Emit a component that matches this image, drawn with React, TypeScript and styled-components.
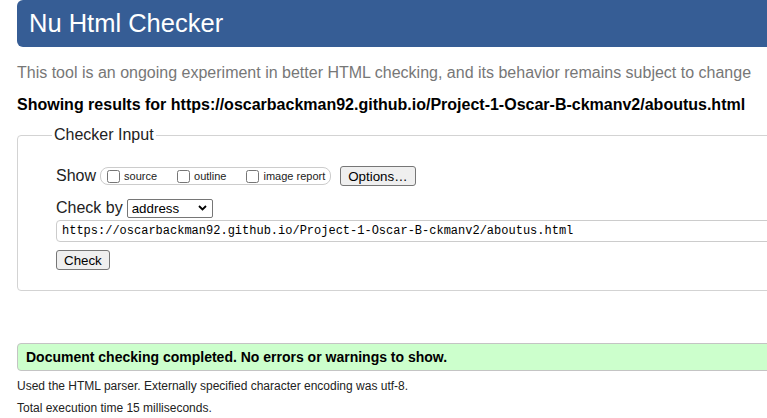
import React from "react";
import styled, { createGlobalStyle } from "styled-components";

const Global = createGlobalStyle`
  html, body { margin: 0; padding: 0; overflow: hidden; background: #fff; }
  body { font-family: "Liberation Sans", Arial, sans-serif; color: #000; }
`;

const Page = styled.div`
  width: 1100px;
  padding-left: 17px;
  box-sizing: border-box;
`;

const Header = styled.header`
  height: 47px;
  background: #365d95;
  border-radius: 6px;
  padding-left: 12px;
`;

const Title = styled.h1`
  margin: 0;
  font-weight: normal;
  font-size: 25.5px;
  line-height: 47px;
  color: #fff;
`;

const Intro = styled.p`
  margin: 17px 0 0;
  font-size: 16px;
  line-height: 18px;
  color: #777;
`;

const ResultsFor = styled.p`
  margin: 14px 0 0;
  font-size: 16px;
  line-height: 18px;
  font-weight: bold;
`;

const Fieldset = styled.fieldset`
  margin: 12px 0 0;
  padding: 4px 0 20px 38px;
  border: 1px solid #d3d3d3;
  border-radius: 4px;
  min-width: 0;
`;

const Legend = styled.legend`
  font-size: 16px;
  line-height: 18px;
  padding: 0 2px;
  margin-left: -4px;
  color: #222;
`;

const Row = styled.div<{ $top: number; $h: number }>`
  display: flex;
  align-items: center;
  height: ${(p) => p.$h}px;
  margin-top: ${(p) => p.$top}px;
`;

const RowLabel = styled.span`
  font-size: 16px;
  line-height: 18px;
  color: #222;
`;

const Pill = styled.span`
  display: inline-flex;
  align-items: center;
  gap: 20px;
  height: 16px;
  margin-left: 4px;
  padding: 0 5px 0 6px;
  border: 1px solid #ccc;
  border-radius: 8px;
`;

const Opt = styled.label`
  display: inline-flex;
  align-items: center;
  gap: 4px;
  font-size: 11px;
  color: #222;
`;

const Box = styled.input`
  margin: 0;
  width: 13px;
  height: 13px;
`;

const Button = styled.button<{ $ml?: number }>`
  margin-left: ${(p) => p.$ml ?? 0}px;
  height: 20px;
  padding: 0 7px;
  font-family: "Liberation Sans", Arial, sans-serif;
  font-size: 13.33px;
  color: #000;
  background: #efefef;
  border: 1px solid #767676;
  border-radius: 3px;
`;

const SelectWrap = styled.span`
  position: relative;
  display: inline-block;
  margin-left: 4px;
  height: 18px;
`;

const Select = styled.select`
  appearance: none;
  width: 86px;
  height: 19px;
  padding: 0 0 0 4px;
  font-family: "Liberation Sans", Arial, sans-serif;
  font-size: 13.33px;
  color: #000;
  background: #fff;
  border: 1px solid #767676;
  border-radius: 2px;
`;

const Chevron = styled.svg`
  position: absolute;
  right: 6px;
  top: 6px;
  pointer-events: none;
`;

const UrlInput = styled.input`
  display: block;
  box-sizing: border-box;
  width: 1000px;
  height: 22px;
  margin-top: 2px;
  padding: 0 5px;
  font-family: "Liberation Mono", "Courier New", monospace;
  font-size: 12px;
  color: #000;
  border: 1px solid #ccc;
  border-radius: 4px;
  outline: none;
`;

const Success = styled.div`
  margin-top: 52px;
  height: 28px;
  box-sizing: border-box;
  padding-left: 8px;
  background: #ccffcc;
  border: 1px solid #c4c4c4;
  border-radius: 4px;
  font-size: 14px;
  font-weight: bold;
  line-height: 26px;
`;

const Note = styled.p<{ $top: number }>`
  margin: ${(p) => p.$top}px 0 0;
  font-size: 12px;
  line-height: 14px;
  color: #222;
`;

export default function App() {
  return (
    <>
      <Global />
      <Page>
        <Header>
          <Title>Nu Html Checker</Title>
        </Header>
        <Intro>
          This tool is an ongoing experiment in better HTML checking, and its behavior remains subject to change
        </Intro>
        <ResultsFor>
          Showing results for https://oscarbackman92.github.io/Project-1-Oscar-B-ckmanv2/aboutus.html
        </ResultsFor>
        <Fieldset>
          <Legend>Checker Input</Legend>
          <Row $top={18} $h={20}>
            <RowLabel>Show</RowLabel>
            <Pill>
              <Opt>
                <Box type="checkbox" />
                source
              </Opt>
              <Opt>
                <Box type="checkbox" />
                outline
              </Opt>
              <Opt>
                <Box type="checkbox" />
                image report
              </Opt>
            </Pill>
            <Button $ml={9}>Options…</Button>
          </Row>
          <Row $top={12} $h={20}>
            <RowLabel>Check by</RowLabel>
            <SelectWrap>
              <Select defaultValue="address">
                <option value="address">address</option>
                <option value="file">file upload</option>
                <option value="text">text input</option>
              </Select>
              <Chevron width="9" height="6" viewBox="0 0 9 6">
                <path d="M1 1 L4.5 4.5 L8 1" fill="none" stroke="#000" strokeWidth="1.8" />
              </Chevron>
            </SelectWrap>
          </Row>
          <UrlInput
            type="url"
            readOnly
            value="https://oscarbackman92.github.io/Project-1-Oscar-B-ckmanv2/aboutus.html"
          />
          <Row $top={8} $h={20}>
            <Button>Check</Button>
          </Row>
        </Fieldset>
        <Success>Document checking completed. No errors or warnings to show.</Success>
        <Note $top={8}>Used the HTML parser. Externally specified character encoding was utf-8.</Note>
        <Note $top={8}>Total execution time 15 milliseconds.</Note>
      </Page>
    </>
  );
}
